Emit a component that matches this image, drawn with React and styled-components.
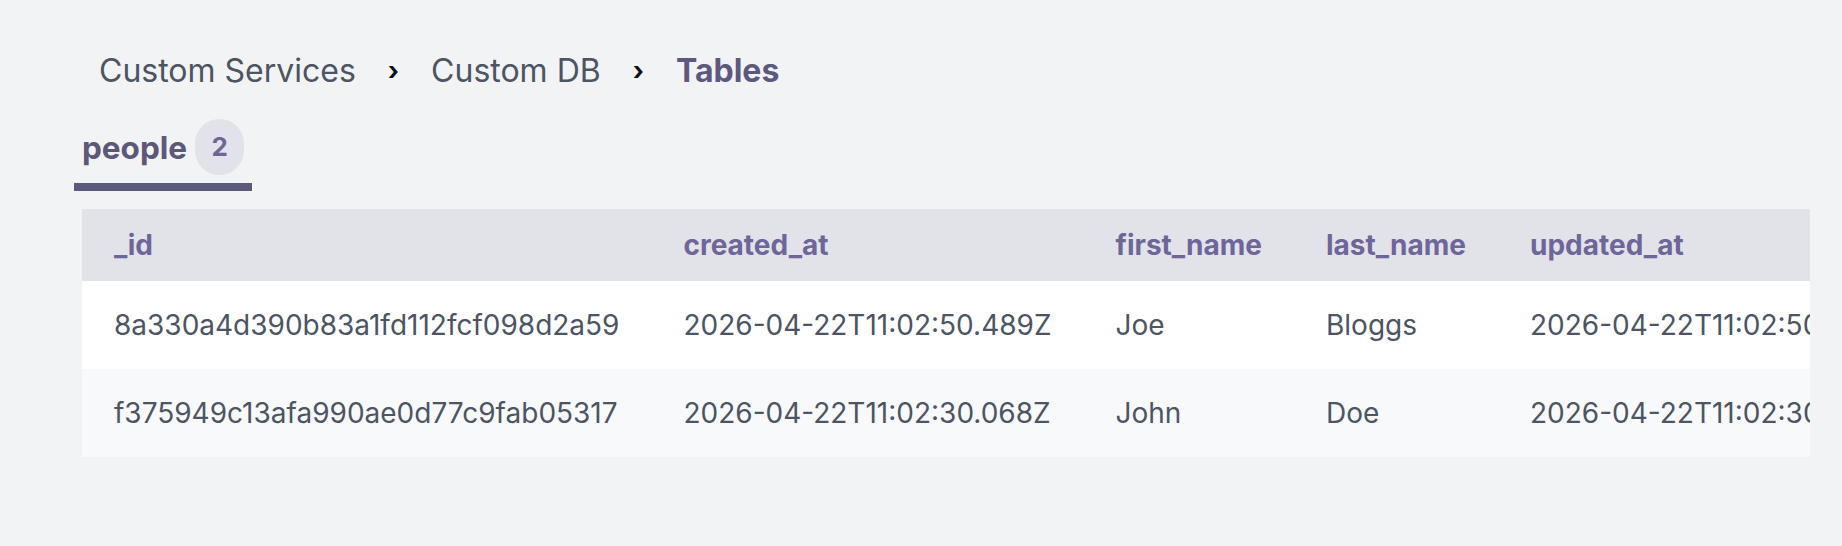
import React from 'react';
import styled, { createGlobalStyle } from 'styled-components';

const GlobalStyle = createGlobalStyle`
  html, body {
    margin: 0;
    padding: 0;
    background: #f2f3f5;
  }
  body {
    font-family: Inter, 'Noto Sans', sans-serif;
    color: #4b5563;
  }
`;

//#region Styles
const Page = styled.main`
  min-height: 100vh;
  padding: 47px 32px 0 74px;
  box-sizing: border-box;
`;

const Breadcrumbs = styled.nav`
  display: flex;
  align-items: center;
  padding-left: 25px;
  font-size: 32px;
  line-height: 48px;
`;

const Crumb = styled.span`
  color: ${({ current }) => (current ? '#5c5880' : '#4b5563')};
  font-weight: ${({ current }) => (current ? 700 : 400)};
`;

const Separator = styled.span`
  margin: 0 32px;
  color: #111;
  font-weight: 700;
  font-size: 26px;
`;

const TabBar = styled.div`
  display: flex;
  margin-top: 24px;
`;

const Tab = styled.button`
  display: flex;
  align-items: center;
  gap: 8px;
  padding: 0 8px 8px;
  border: none;
  border-bottom: 8px solid ${({ active }) => (active ? '#5c5a7c' : 'transparent')};
  background: none;
  font-family: inherit;
  font-size: 31.5px;
  font-weight: 700;
  color: #5c5878;
  cursor: pointer;
`;

const Badge = styled.span`
  display: inline-block;
  min-width: 17px;
  padding: 10px 16px;
  border-radius: 9999px;
  background: #e2e2ea;
  color: #6e6699;
  font-size: 26px;
  line-height: 36px;
  font-weight: 700;
  text-align: center;
`;

const TableScroll = styled.div`
  margin: 18px 0 0 8px;
  overflow-x: auto;
  scrollbar-width: none;
  &::-webkit-scrollbar {
    display: none;
  }
`;

const Table = styled.table`
  border-collapse: collapse;
  white-space: nowrap;
  font-size: 28px;
`;

const HeadCell = styled.th`
  height: 72px;
  padding: 0 32px;
  text-align: left;
  font-weight: 700;
  color: #6e6699;
  background: #e2e3e8;
`;

const Row = styled.tr`
  background: ${({ striped }) => (striped ? '#f8f9fb' : '#ffffff')};
`;

const Cell = styled.td`
  height: 88px;
  padding: 0 32px;
  color: #4b5563;
`;
//#endregion

const columns = ['_id', 'created_at', 'first_name', 'last_name', 'updated_at'];

const rows = [
  {
    _id: '8a330a4d390b83a1fd112fcf098d2a59',
    created_at: '2026-04-22T11:02:50.489Z',
    first_name: 'Joe',
    last_name: 'Bloggs',
    updated_at: '2026-04-22T11:02:50.489Z',
  },
  {
    _id: 'f375949c13afa990ae0d77c9fab05317',
    created_at: '2026-04-22T11:02:30.068Z',
    first_name: 'John',
    last_name: 'Doe',
    updated_at: '2026-04-22T11:02:30.068Z',
  },
];

const App = () => (
  <>
    <GlobalStyle />
    <Page>
      <Breadcrumbs>
        <Crumb>Custom Services</Crumb>
        <Separator>›</Separator>
        <Crumb>Custom DB</Crumb>
        <Separator>›</Separator>
        <Crumb current>Tables</Crumb>
      </Breadcrumbs>

      <TabBar>
        <Tab active>
          people <Badge>{rows.length}</Badge>
        </Tab>
      </TabBar>

      <TableScroll>
        <Table>
          <thead>
            <tr>
              {columns.map(col => (
                <HeadCell key={col}>{col}</HeadCell>
              ))}
            </tr>
          </thead>
          <tbody>
            {rows.map((row, idx) => (
              <Row key={row._id} striped={idx % 2 === 1}>
                {columns.map(col => (
                  <Cell key={col}>{row[col]}</Cell>
                ))}
              </Row>
            ))}
          </tbody>
        </Table>
      </TableScroll>
    </Page>
  </>
);

export default App;
